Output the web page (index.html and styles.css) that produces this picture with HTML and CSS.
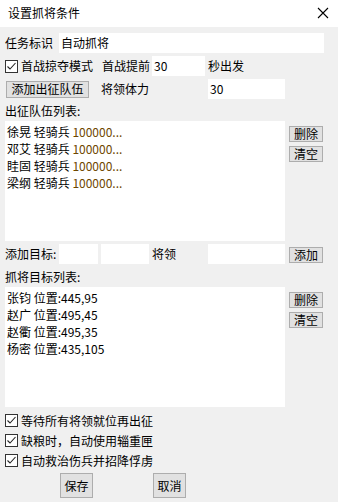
FILE: index.html
```html
<!DOCTYPE html>
<html lang="zh-CN">
<head>
<meta charset="utf-8">
<title>设置抓将条件</title>
<link rel="stylesheet" href="styles.css">
</head>
<body>
<div class="window">
  <div class="titlebar">
    <span class="title">设置抓将条件</span>
    <svg class="close" width="12" height="12" viewBox="0 0 12 12"><path d="M1 1L11 11M11 1L1 11" stroke="#000" stroke-width="1.1" fill="none"/></svg>
  </div>
  <div class="content">
    <div class="row r1">
      <span class="lbl w54">任务标识</span>
      <div class="field f-name">自动抓将</div>
    </div>
    <div class="row r2">
      <span class="check"><svg width="13" height="13" viewBox="0 0 13 13"><rect x="0.5" y="0.5" width="12" height="12" fill="#fff" stroke="#333"/><path d="M2.5 6.5L5 9L10.5 3" stroke="#222" stroke-width="1.1" fill="none"/></svg></span>
      <span class="lbl w81">首战掠夺模式</span>
      <span class="lbl w50">首战提前</span>
      <div class="field f-sec">30</div>
      <span class="lbl pl3">秒出发</span>
    </div>
    <div class="row r3">
      <button class="btn b-add-team">添加出征队伍</button>
      <span class="lbl w119">将领体力</span>
      <div class="field f-hp">30</div>
    </div>
    <div class="caption c1">出征队伍列表:</div>
    <div class="listrow l1">
      <div class="listbox">
        <div class="item">徐晃 轻骑兵 <span class="num">100000...</span></div>
        <div class="item">邓艾 轻骑兵 <span class="num">100000...</span></div>
        <div class="item">眭固 轻骑兵 <span class="num">100000...</span></div>
        <div class="item">梁纲 轻骑兵 <span class="num">100000...</span></div>
      </div>
      <div class="side">
        <button class="btn sbtn">删除</button>
        <button class="btn sbtn">清空</button>
      </div>
    </div>
    <div class="row r4">
      <span class="lbl w54">添加目标:</span>
      <div class="field f-x"></div>
      <div class="field f-y"></div>
      <span class="lbl w56">将领</span>
      <div class="field f-gen"></div>
      <button class="btn sbtn add">添加</button>
    </div>
    <div class="caption c2">抓将目标列表:</div>
    <div class="listrow l2">
      <div class="listbox">
        <div class="item">张钧 位置:445,95</div>
        <div class="item">赵广 位置:495,45</div>
        <div class="item">赵衢 位置:495,35</div>
        <div class="item">杨密 位置:435,105</div>
      </div>
      <div class="side">
        <button class="btn sbtn">删除</button>
        <button class="btn sbtn">清空</button>
      </div>
    </div>
    <div class="opts">
      <div class="opt"><span class="check"><svg width="13" height="13" viewBox="0 0 13 13"><rect x="0.5" y="0.5" width="12" height="12" fill="#fff" stroke="#333"/><path d="M2.5 6.5L5 9L10.5 3" stroke="#222" stroke-width="1.1" fill="none"/></svg></span><span class="lbl">等待所有将领就位再出征</span></div>
      <div class="opt"><span class="check"><svg width="13" height="13" viewBox="0 0 13 13"><rect x="0.5" y="0.5" width="12" height="12" fill="#fff" stroke="#333"/><path d="M2.5 6.5L5 9L10.5 3" stroke="#222" stroke-width="1.1" fill="none"/></svg></span><span class="lbl">缺粮时，自动使用辎重匣</span></div>
      <div class="opt"><span class="check"><svg width="13" height="13" viewBox="0 0 13 13"><rect x="0.5" y="0.5" width="12" height="12" fill="#fff" stroke="#333"/><path d="M2.5 6.5L5 9L10.5 3" stroke="#222" stroke-width="1.1" fill="none"/></svg></span><span class="lbl">自动救治伤兵并招降俘虏</span></div>
    </div>
    <div class="actions">
      <button class="btn big">保存</button>
      <button class="btn big">取消</button>
    </div>
  </div>
</div>
</body>
</html>
```
FILE: styles.css
```css
* { box-sizing: border-box; }
html, body { margin: 0; padding: 0; }
body {
  width: 338px;
  height: 502px;
  background: #f0f0f0;
  font-family: "Microsoft YaHei", "Noto Sans CJK SC", "Noto Sans", sans-serif;
  font-size: 12px;
  color: #000;
  overflow: hidden;
}
.window { width: 338px; height: 502px; display: flex; flex-direction: column; }
.titlebar {
  height: 27px;
  background: #fff;
  display: flex;
  align-items: center;
  justify-content: space-between;
  padding: 0 9px 2px 8px;
  flex: none;
}
.title { font-size: 12px; line-height: 16px; }
.close { display: block; }
.content {
  flex: 1;
  padding: 6px 0 0 5px;
  display: flex;
  flex-direction: column;
}
.row { display: flex; align-items: center; height: 20px; }
.lbl { white-space: nowrap; line-height: 16px; flex: none; }
.w54 { width: 54px; }
.w50 { width: 50px; }
.w56 { width: 56px; margin-left: 3px; }
.w81 { width: 81px; }
.w119 { width: 119px; padding-left: 12px; }
.pl3 { padding-left: 3px; }
.field {
  background: #fff;
  height: 20px;
  line-height: 19px;
  padding-left: 2px;
  flex: none;
  white-space: nowrap;
}
.f-name { width: 265px; }
.f-sec { width: 53px; }
.f-hp { width: 77px; }
.f-x { width: 39px; }
.f-y { width: 48px; margin-left: 3px; }
.f-gen { width: 77px; }
.r2 { margin-top: 3px; }
.r3 { margin-top: 3px; }
.check { width: 16px; height: 13px; flex: none; display: flex; }
.check svg { display: block; }
.btn {
  font-family: inherit;
  font-size: 12px;
  background: #e1e1e1;
  border: 1px solid #adadad;
  color: #000;
  padding: 0;
  margin: 0;
  line-height: 14px;
  border-radius: 0;
}
.b-add-team { width: 83px; height: 17px; margin-left: 1px; }
.caption { line-height: 16px; height: 16px; }
.c1 { margin-top: 4px; }
.c2 { margin-top: 5px; }
.listrow { display: flex; margin-top: 2px; }
.listbox {
  width: 280px;
  height: 120px;
  background: #fff;
  padding: 2px 0 0 2px;
  flex: none;
}
.item { line-height: 17px; height: 17px; white-space: nowrap; }
.num { color: #6e4600; }
.side {
  display: flex;
  flex-direction: column;
  gap: 4px;
  padding: 5px 0 0 4px;
}
.sbtn { width: 34px; height: 16px; }
.r4 { margin-top: 3px; }
.add { margin-left: 4px; margin-top: 2px; }
.opts { margin-top: 5px; display: flex; flex-direction: column; gap: 3px; }
.opt { display: flex; align-items: center; height: 17px; }
.actions { display: flex; gap: 60px; padding-left: 55px; margin-top: 4px; }
.big { width: 33px; height: 25px; }
```
